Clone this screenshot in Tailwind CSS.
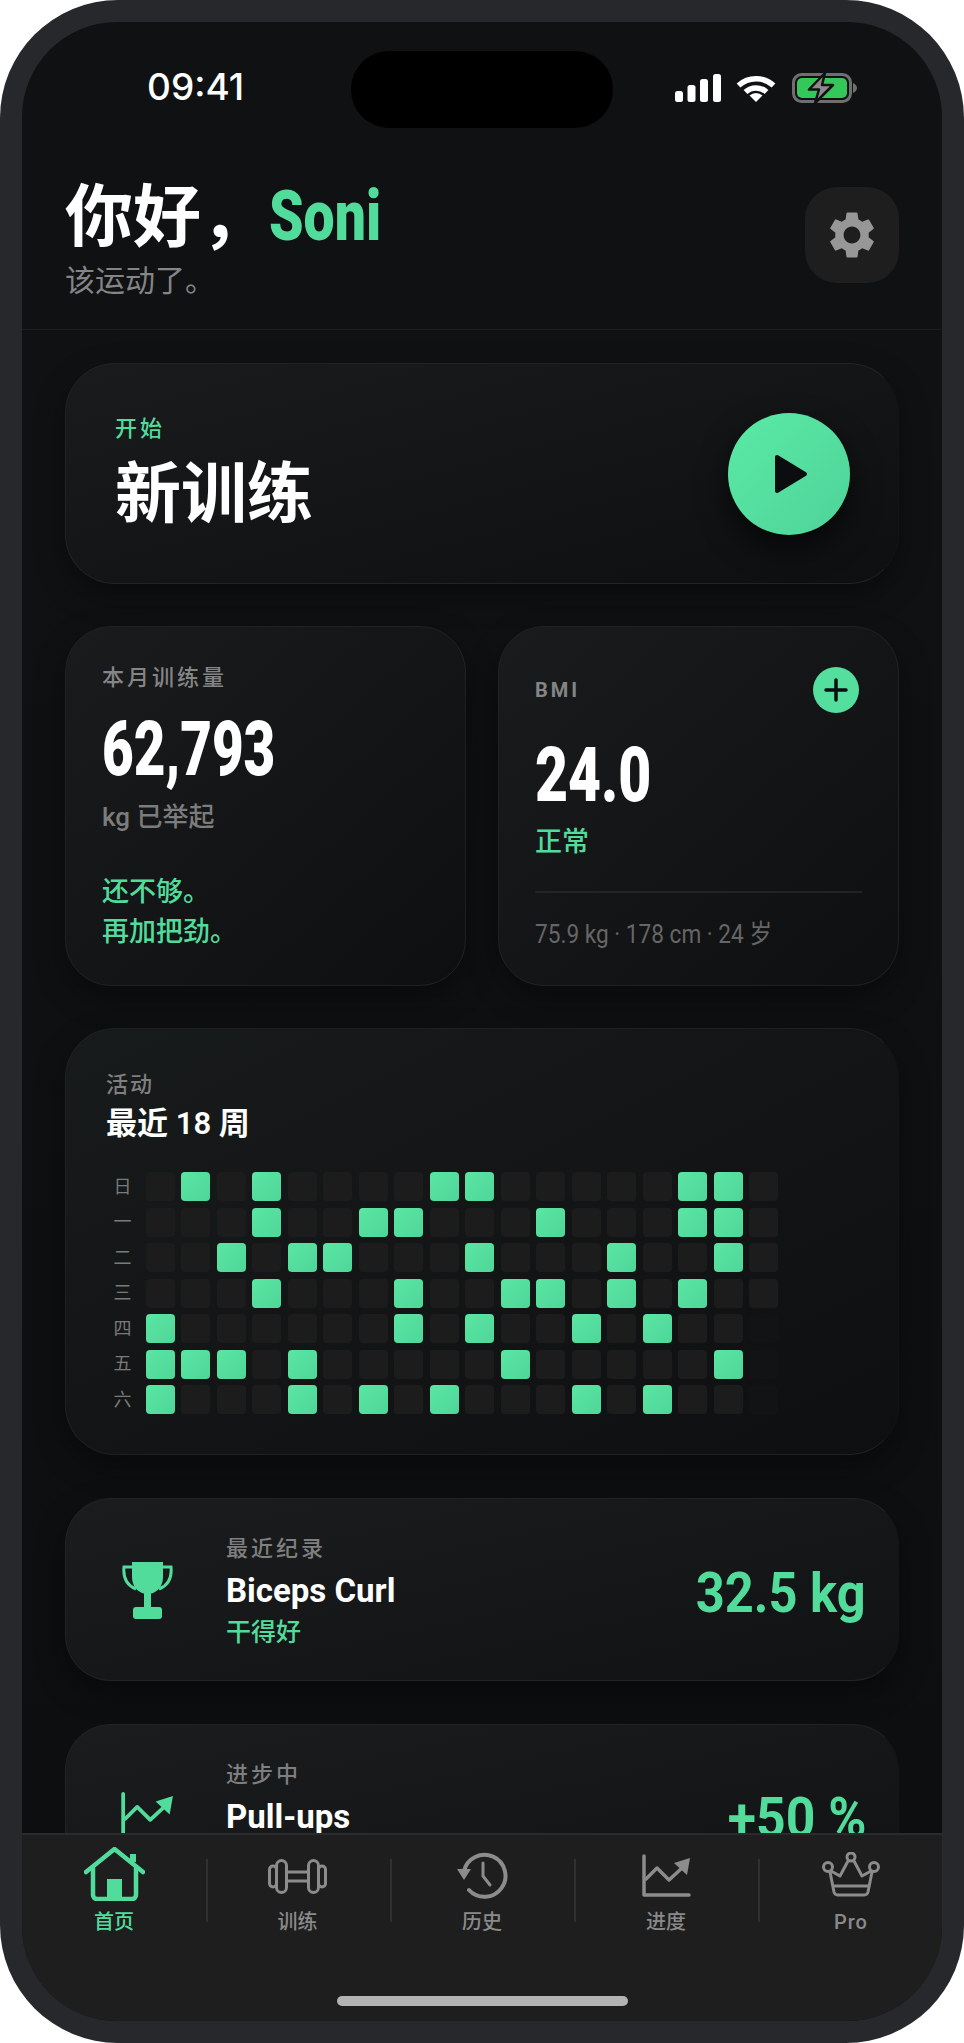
<!DOCTYPE html>
<html lang="zh-CN">
<head>
    <meta charset="UTF-8">
    <meta name="viewport" content="width=device-width, initial-scale=1.0">
    <title>首页</title>
    <script src="https://cdn.jsdelivr.net/npm/@tailwindcss/browser@4"></script>
</head>
<body class="bg-white font-['Roboto','Noto_Sans_CJK_SC',sans-serif]">

<div class="w-[964px] h-[2043px] rounded-[118px] bg-[#26282c] p-[22px]">
    <div class="w-[920px] h-[1999px] rounded-[95px] overflow-hidden bg-[#101113] flex flex-col">

        <!-- status bar -->
        <div class="flex items-center h-[77px] mt-[29px] pl-[125px] shrink-0">
            <span class="w-[204px] font-['Inter'] text-[37px] font-medium leading-none text-white pb-[6px]">09:41</span>
            <div class="w-[262px] h-[77px] rounded-[38px] bg-black"></div>
            <div class="flex items-center ml-[62px] pb-[3px]">
                <svg class="w-[46px] h-[28px]" viewBox="0 0 46 28" fill="#fff">
                    <rect x="0" y="17" width="8" height="11" rx="2.5"/>
                    <rect x="12.5" y="11" width="8" height="17" rx="2.5"/>
                    <rect x="25" y="5" width="8" height="23" rx="2.5"/>
                    <rect x="38" y="0" width="8" height="28" rx="2.5"/>
                </svg>
                <svg class="w-[40px] h-[27px] ml-[15px]" viewBox="0 0 40 27">
                    <path d="M2.5 10.5A26 26 0 0 1 37.5 10.5" fill="none" stroke="#fff" stroke-width="5.500"/>
                    <path d="M9.5 17A15.500 15.500 0 0 1 30.500 17" fill="none" stroke="#fff" stroke-width="5.500"/>
                    <path d="M20 27L13.500 20.500A9.500 9.500 0 0 1 26.500 20.500Z" fill="#fff"/>
                </svg>
                <svg class="w-[66px] h-[32px] ml-[16px]" viewBox="0 0 66 32">
                    <rect x="1.500" y="2.500" width="57" height="27" rx="8" fill="none" stroke="#6f6f6f" stroke-width="3"/>
                    <rect x="5" y="6" width="50" height="20" rx="5" fill="#34c759"/>
                    <path d="M61 11q4 2 4 5t-4 5z" fill="#6f6f6f"/>
                    <path d="M33 1L17 17.500H27L23 31L41 13H30Z" fill="#8a8a8a" stroke="#101113" stroke-width="2.500" stroke-linejoin="round"/>
                </svg>
            </div>
        </div>

        <!-- header -->
        <div class="flex justify-between items-start h-[202px] pt-[53px] px-[43px] border-b border-[#1c1d1f] shrink-0">
            <div>
                <div class="flex items-start leading-none">
                    <span class="text-[68px] font-semibold text-white mt-[3px]">你好，</span>
                    <span class="inline-block origin-left scale-x-[.79] text-[70px] font-black text-[#52dc9c]">Soni</span>
                </div>
                <p class="text-[30px] leading-none text-[#858585] mt-[14px]">该运动了。</p>
            </div>
            <button class="w-[94px] h-[96px] mt-[6px] rounded-[32px] bg-[#1e1e1f] flex items-center justify-center">
                <svg class="w-[56px] h-[56px]" viewBox="0 0 24 24" fill="#979797">
                    <path d="M19.14,12.94c0.04-0.3,0.06-0.61,0.06-0.94c0-0.32-0.02-0.64-0.07-0.94l2.03-1.58c0.18-0.14,0.23-0.41,0.12-0.61 l-1.92-3.32c-0.12-0.22-0.37-0.29-0.59-0.22l-2.39,0.96c-0.5-0.38-1.03-0.7-1.62-0.94L14.4,2.81c-0.04-0.24-0.24-0.41-0.48-0.41 h-3.84c-0.24,0-0.43,0.17-0.47,0.41L9.25,5.35C8.66,5.59,8.12,5.92,7.63,6.29L5.24,5.33c-0.22-0.08-0.47,0-0.59,0.22L2.74,8.87 C2.62,9.08,2.66,9.34,2.86,9.48l2.03,1.58C4.84,11.36,4.8,11.69,4.8,12s0.02,0.64,0.07,0.94l-2.03,1.58 c-0.18,0.14-0.23,0.41-0.12,0.61l1.92,3.32c0.12,0.22,0.37,0.29,0.59,0.22l2.39-0.96c0.5,0.38,1.03,0.7,1.62,0.94l0.36,2.54 c0.05,0.24,0.24,0.41,0.48,0.41h3.84c0.24,0,0.44-0.17,0.47-0.41l0.36-2.54c0.59-0.24,1.13-0.56,1.62-0.94l2.39,0.96 c0.22,0.08,0.47,0,0.59-0.22l1.92-3.32c0.12-0.22,0.07-0.47-0.12-0.61L19.14,12.94z M12,15.6c-1.98,0-3.6-1.62-3.6-3.6 s1.62-3.6,3.6-3.6s3.6,1.62,3.6,3.6S13.98,15.6,12,15.6z"/>
                </svg>
            </button>
        </div>

        <!-- scroll area -->
        <div class="flex-1 min-h-0 overflow-hidden px-[43px] pt-[33px] bg-linear-to-b from-[#101113] to-[#0d0e0f]">

            <div class="h-[221px] rounded-[50px] border border-[#212324] border-r-[#131415] bg-linear-to-br from-[#191b1c] to-[#0e0f10] shadow-[0_12px_30px_rgba(0,0,0,.35)] flex items-center justify-between pl-[49px] pr-[48px]">
                <div class="pb-[2px]">
                    <p class="text-[22px] leading-none font-medium tracking-[3px] text-[#52dc9c]">开始</p>
                    <p class="text-[66px] leading-none font-bold text-white mt-[22px]">新训练</p>
                </div>
                <button class="w-[122px] h-[122px] rounded-full bg-linear-to-br from-[#5aeaa5] to-[#4fd39a] shadow-[0_14px_30px_rgba(0,0,0,.6)] flex items-center justify-center">
                    <svg class="w-[34px] h-[40px] ml-[4px]" viewBox="0 0 34 40"><path d="M3 3L31 20L3 37Z" fill="#0c0d0e" stroke="#0c0d0e" stroke-width="4" stroke-linejoin="round"/></svg>
                </button>
            </div>

            <div class="grid grid-cols-2 gap-[32px] mt-[42px]">
                <div class="h-[360px] rounded-[46px] border border-[#1f2122] bg-linear-to-br from-[#191b1c] to-[#0e0f10] shadow-[0_12px_30px_rgba(0,0,0,.35)] pl-[36px] pt-[40px]">
                    <p class="text-[22px] leading-none font-medium tracking-[3px] text-[#858585]">本月训练量</p>
                    <p class="origin-left scale-x-[.72] text-[76px] leading-none font-black text-white mt-[22px]">62,793</p>
                    <p class="text-[26px] leading-none font-medium text-[#7c7c7c] mt-[17px]">kg 已举起</p>
                    <p class="text-[27px] leading-[40px] font-medium text-[#52dc9c] mt-[42px]">还不够。<br>再加把劲。</p>
                </div>
                <div class="h-[360px] rounded-[46px] border border-[#1f2122] bg-linear-to-br from-[#191b1c] to-[#0e0f10] shadow-[0_12px_30px_rgba(0,0,0,.35)] pl-[36px] pr-[36px] pt-[40px]">
                    <div class="flex items-center justify-between pr-[3px]">
                        <span class="text-[20px] font-bold tracking-[3px] text-[#858585]">BMI</span>
                        <span class="w-[46px] h-[46px] rounded-full bg-[#54df9e] flex items-center justify-center">
                            <svg class="w-[24px] h-[24px]" viewBox="0 0 24 24"><path d="M12 2V22M2 12H22" stroke="#0c0d0e" stroke-width="3.500" stroke-linecap="round"/></svg>
                        </span>
                    </div>
                    <p class="origin-left scale-x-[.75] text-[76px] leading-none font-black text-white mt-[24px]">24.0</p>
                    <p class="text-[27px] leading-none font-medium text-[#52dc9c] mt-[16px]">正常</p>
                    <div class="h-[2px] bg-[#222425] mt-[35px]"></div>
                    <p class="origin-left scale-x-[.87] whitespace-nowrap text-[26px] leading-none font-normal text-[#666666] mt-[28px]">75.9 kg · 178 cm · 24 岁</p>
                </div>
            </div>

            <div class="h-[427px] rounded-[50px] border border-[#1f2122] border-r-[#131415] bg-linear-to-br from-[#181b1b] to-[#0e0f10] shadow-[0_12px_30px_rgba(0,0,0,.35)] mt-[42px] pl-[40px] pt-[45px]">
                <p class="text-[22px] leading-none font-medium tracking-[2px] text-[#7f7f7f]">活动</p>
                <p class="text-[31px] leading-none font-semibold text-white mt-[12px]">最近 18 周</p>
                <div id="heat" class="flex flex-col gap-[6.5px] mt-[33px]"></div>
            </div>

            <div class="h-[183px] rounded-[46px] border border-[#212324] border-r-[#141516] bg-linear-to-br from-[#1a1c1d] to-[#111213] shadow-[0_12px_30px_rgba(0,0,0,.35)] mt-[43px] flex items-start pl-[55px] pr-[32px] pt-[39px]">
                <svg class="w-[53px] h-[58px] shrink-0 mt-[23px]" viewBox="0 0 53 58" fill="#52dc9c">
                    <path d="M11 1H42V16C42 27 34 33 26.500 33C19 33 11 27 11 16Z"/>
                    <path d="M11 6H3C2 16 5 24 15 28M42 6H50C51 16 48 24 38 28" fill="none" stroke="#52dc9c" stroke-width="3"/>
                    <rect x="23" y="32" width="7" height="15"/>
                    <rect x="12" y="46" width="29" height="12" rx="3"/>
                </svg>
                <div class="ml-[52px] flex-1">
                    <p class="text-[22px] leading-none font-medium tracking-[3px] text-[#7f7f7f]">最近纪录</p>
                    <p class="text-[33px] leading-none font-bold text-white mt-[14px]">Biceps Curl</p>
                    <p class="text-[25px] leading-none font-medium text-[#52dc9c] mt-[13px]">干得好</p>
                </div>
                <span class="inline-block origin-right scale-x-[.92] mt-[28px] text-[55px] leading-none font-bold text-[#52dc9c]">32.5 kg</span>
            </div>

            <div class="h-[183px] rounded-[46px] border border-[#212324] border-r-[#141516] bg-linear-to-br from-[#1a1c1d] to-[#111213] mt-[43px] flex items-start pl-[55px] pr-[32px] pt-[39px]">
                <svg class="w-[53px] h-[48px] shrink-0 mt-[27px]" viewBox="0 0 49 43" fill="none" stroke="#52dc9c" stroke-width="3.500" stroke-linecap="round" stroke-linejoin="round">
                    <path d="M2 2V41H47"/>
                    <path d="M4 25L15 14L27 26L40 14"/>
                    <path d="M48 4L32 9L45 21Z" fill="#52dc9c" stroke="none"/>
                </svg>
                <div class="ml-[52px] flex-1">
                    <p class="text-[22px] leading-none font-medium tracking-[3px] text-[#7f7f7f]">进步中</p>
                    <p class="text-[33px] leading-none font-bold text-white mt-[14px]">Pull-ups</p>
                </div>
                <span class="inline-block origin-right scale-x-[.94] mt-[27px] text-[55px] leading-none font-bold text-[#52dc9c]">+50 %</span>
            </div>
        </div>

        <!-- tab bar -->
        <div class="h-[188px] shrink-0 border-t-2 border-[#2a2b2c] bg-[#1e1e1f] flex flex-col">
            <div class="grid grid-cols-5 h-[101px] pt-[12px]">
                <div class="flex flex-col items-center">
                    <svg class="w-[61px] h-[54px]" viewBox="0 0 61 54" fill="none" stroke="#52dc9c" stroke-width="4.500" stroke-linecap="round" stroke-linejoin="round">
                        <path d="M2 25L30.500 2L59 25"/>
                        <path d="M9 21V48a4 4 0 0 0 4 4H48a4 4 0 0 0 4-4V21"/>
                        <path d="M49 15V7" stroke-width="6" stroke-linecap="butt"/>
                        <rect x="23" y="32" width="15" height="19" fill="#52dc9c" stroke="none"/>
                    </svg>
                    <span class="text-[20px] leading-none font-medium text-[#52dc9c] mt-[11px]">首页</span>
                </div>
                <div class="flex flex-col items-center border-l-2 border-[#2f3031] pr-[3px] h-[63px] mt-[12px]">
                    <svg class="w-[59px] h-[35px] shrink-0" viewBox="0 0 59 35" fill="none" stroke="#8c8c8c" stroke-width="3">
                        <rect x="1.500" y="7" width="7" height="21" rx="3.500"/>
                        <rect x="8.500" y="1.500" width="10" height="32" rx="5"/>
                        <rect x="40.500" y="1.500" width="10" height="32" rx="5"/>
                        <rect x="50.500" y="7" width="7" height="21" rx="3.500"/>
                        <path d="M18.500 13H40.500M18.500 22H40.500"/>
                    </svg>
                    <span class="text-[20px] leading-none font-medium text-[#8a8a8a] mt-[18px]">训练</span>
                </div>
                <div class="flex flex-col items-center border-l-2 border-[#2f3031] pr-[2px] h-[63px] mt-[12px]">
                    <svg class="w-[51px] h-[47px] shrink-0 mt-[-7px]" viewBox="0 0 51 47" fill="none" stroke="#8c8c8c" stroke-width="4" stroke-linecap="round" stroke-linejoin="round">
                        <path d="M7 19A21 21 0 1 1 12 38"/>
                        <path d="M0 17H14L7 28Z" fill="#8c8c8c" stroke="none"/>
                        <path d="M26 11V24L33 33" stroke-width="3"/>
                    </svg>
                    <span class="text-[20px] leading-none font-medium text-[#8a8a8a] mt-[13px]">历史</span>
                </div>
                <div class="flex flex-col items-center border-l-2 border-[#2f3031] pr-[2px] h-[63px] mt-[12px]">
                    <svg class="w-[49px] h-[43px] shrink-0 mt-[-5px]" viewBox="0 0 49 43" fill="none" stroke="#8c8c8c" stroke-width="3.500" stroke-linecap="round" stroke-linejoin="round">
                        <path d="M2 2V41H47"/>
                        <path d="M4 25L15 14L27 26L40 14"/>
                        <path d="M48 4L32 9L45 21Z" fill="#8c8c8c" stroke="none"/>
                    </svg>
                    <span class="text-[20px] leading-none font-medium text-[#8a8a8a] mt-[15px]">进度</span>
                </div>
                <div class="flex flex-col items-center border-l-2 border-[#2f3031] h-[63px] mt-[12px]">
                    <svg class="w-[58px] h-[45px] shrink-0 mt-[-7px]" viewBox="0 0 58 45" fill="none" stroke="#8c8c8c" stroke-width="3" stroke-linecap="round" stroke-linejoin="round">
                        <circle cx="29" cy="5" r="4"/>
                        <circle cx="6" cy="15" r="4.500"/>
                        <circle cx="52" cy="15" r="4.500"/>
                        <path d="M8 20L12 40a4 4 0 0 0 4 3H42a4 4 0 0 0 4-3L50 20"/>
                        <path d="M9 19L18 24L26 9M32 9L40 24L49 19"/>
                        <path d="M12 34H46"/>
                    </svg>
                    <span class="text-[20px] leading-none font-medium tracking-[1px] text-[#8a8a8a] mt-[15px]">Pro</span>
                </div>
            </div>
            <div class="flex-1 flex justify-center pt-[60px]">
                <div class="w-[291px] h-[10px] rounded-full bg-[#b3b3b3]"></div>
            </div>
        </div>
    </div>
</div>

<script>
    // 训练日历：每行一周中的一天，18 列
    const days = ["日", "一", "二", "三", "四", "五", "六"];
    const done = [
        [1, 3, 8, 9, 15, 16],
        [3, 6, 7, 11, 15, 16],
        [2, 4, 5, 9, 13, 16],
        [3, 7, 10, 11, 13, 15],
        [0, 7, 9, 12, 14],
        [0, 1, 2, 4, 10, 16],
        [0, 4, 6, 8, 12, 14]
    ];
    const heat = document.getElementById("heat");
    days.forEach((d, r) => {
        const row = document.createElement("div");
        row.className = "flex items-center gap-[6.5px]";
        const label = document.createElement("span");
        label.className = "w-[33px] text-center text-[18px] leading-none text-[#7a7a7a]";
        label.textContent = d;
        row.appendChild(label);
        for (let c = 0; c < 18; c++) {
            const cell = document.createElement("div");
            if (done[r].includes(c)) {
                cell.className = "w-[29px] h-[29px] rounded-[4px] bg-linear-to-br from-[#5ae6a3] to-[#4fd699]";
            } else if (c === 17 && r > 3) {
                cell.className = "w-[29px] h-[29px] rounded-[4px] bg-[#121314]";
            } else {
                cell.className = "w-[29px] h-[29px] rounded-[4px] bg-[#1c1c1d]";
            }
            row.appendChild(cell);
        }
        heat.appendChild(row);
    });
</script>
</body>
</html>
